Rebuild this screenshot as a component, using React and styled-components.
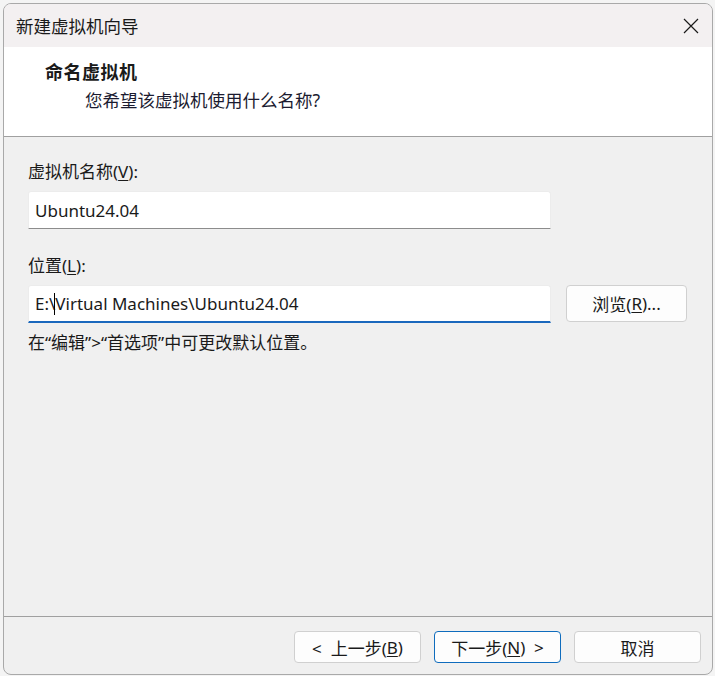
import React from "react";
import styled, { createGlobalStyle } from "styled-components";

const Global = createGlobalStyle`
  html, body {
    margin: 0;
    padding: 0;
    background: #f4f4f4;
  }
  body {
    font-family: "Noto Sans", "Noto Sans CJK SC", sans-serif;
    color: #1a1a1a;
  }
`;

const Window = styled.div`
  box-sizing: border-box;
  margin: 3px;
  width: 710px;
  height: 672px;
  border: 1px solid #a9a9a9;
  border-radius: 8px;
  background: #f0f0f0;
  display: flex;
  flex-direction: column;
  overflow: hidden;
`;

const TitleBar = styled.div`
  height: 43px;
  flex: none;
  background: #f3f0f1;
  display: flex;
  align-items: center;
  justify-content: space-between;
  padding: 0 11px 0 12px;
  font-size: 17.5px;
`;

const CloseButton = styled.div`
  width: 20px;
  height: 20px;
  display: flex;
  align-items: center;
  justify-content: center;
`;

const Header = styled.div`
  height: 90px;
  flex: none;
  box-sizing: border-box;
  background: #ffffff;
  border-bottom: 1px solid #a0a0a0;
  padding-top: 13px;
`;

const HeaderTitle = styled.div`
  padding-left: 41px;
  font-size: 18px;
  font-weight: 700;
  line-height: 24px;
  letter-spacing: 0.5px;
`;

const HeaderSub = styled.div`
  padding-left: 81px;
  margin-top: 4px;
  font-size: 17.5px;
  line-height: 24px;
  color: #1b1b30;
`;

const Body = styled.div`
  flex: 1;
  padding: 23px 0 0 24px;
`;

const Label = styled.div`
  font-size: 17px;
  line-height: 24px;
  margin-top: ${(p) => p.$top || 0}px;
`;

const Key = styled.span`
  text-decoration: underline;
  text-underline-offset: 2px;
`;

const Row = styled.div`
  display: flex;
  align-items: flex-start;
  gap: 15px;
  margin-top: 7px;
`;

const Field = styled.div`
  box-sizing: border-box;
  width: 523px;
  height: 38px;
  background: #ffffff;
  border: 1px solid #ececec;
  border-bottom: ${(p) => (p.$focused ? "2px solid #1a68bd" : "1px solid #8c8c8c")};
  border-radius: 3px 3px 0 0;
  padding: 0 6px;
  display: flex;
  align-items: center;
  font-size: 17px;
  white-space: pre;
`;

const Caret = styled.span`
  display: inline-block;
  width: 1px;
  height: 22px;
  background: #000;
  margin: 0 0 0 -1px;
  vertical-align: middle;
`;

const Note = styled.div`
  margin-top: 8px;
  font-size: 17px;
  line-height: 24px;
`;

const Footer = styled.div`
  flex: none;
  border-top: 1px solid #a0a0a0;
  padding: 14px 11px 11px 0;
  display: flex;
  justify-content: flex-end;
  gap: 13px;
`;

const Button = styled.button`
  box-sizing: border-box;
  width: ${(p) => p.$w || 127}px;
  height: ${(p) => p.$h || 32}px;
  background: #fdfdfd;
  border: 1px solid ${(p) => (p.$primary ? "#0f6cbd" : "#d0d0d0")};
  border-radius: 4px;
  font-family: "Noto Sans", "Noto Sans CJK SC", sans-serif;
  font-size: 17px;
  color: #1a1a1a;
  padding: 0;
  display: flex;
  align-items: center;
  justify-content: center;
  white-space: pre;
`;

export default function App() {
  return (
    <>
      <Global />
      <Window>
        <TitleBar>
          <span>新建虚拟机向导</span>
          <CloseButton>
            <svg width="16" height="16" viewBox="0 0 16 16">
              <path d="M1 1 L15 15 M15 1 L1 15" stroke="#1a1a1a" strokeWidth="1.2" fill="none" />
            </svg>
          </CloseButton>
        </TitleBar>
        <Header>
          <HeaderTitle>命名虚拟机</HeaderTitle>
          <HeaderSub>您希望该虚拟机使用什么名称?</HeaderSub>
        </Header>
        <Body>
          <Label>
            虚拟机名称(<Key>V</Key>):
          </Label>
          <Row>
            <Field>Ubuntu24.04</Field>
          </Row>
          <Label $top={25}>
            位置(<Key>L</Key>):
          </Label>
          <Row>
            <Field $focused>
              E:\<Caret />Virtual Machines\Ubuntu24.04
            </Field>
            <Button $w={121} $h={37}>
              浏览(<Key>R</Key>)...
            </Button>
          </Row>
          <Note>在“编辑”&gt;“首选项”中可更改默认位置。</Note>
        </Body>
        <Footer>
          <Button>
            {"<  上一步("}<Key>B</Key>)
          </Button>
          <Button $primary>
            下一步(<Key>N</Key>{")  >"}
          </Button>
          <Button>取消</Button>
        </Footer>
      </Window>
    </>
  );
}
